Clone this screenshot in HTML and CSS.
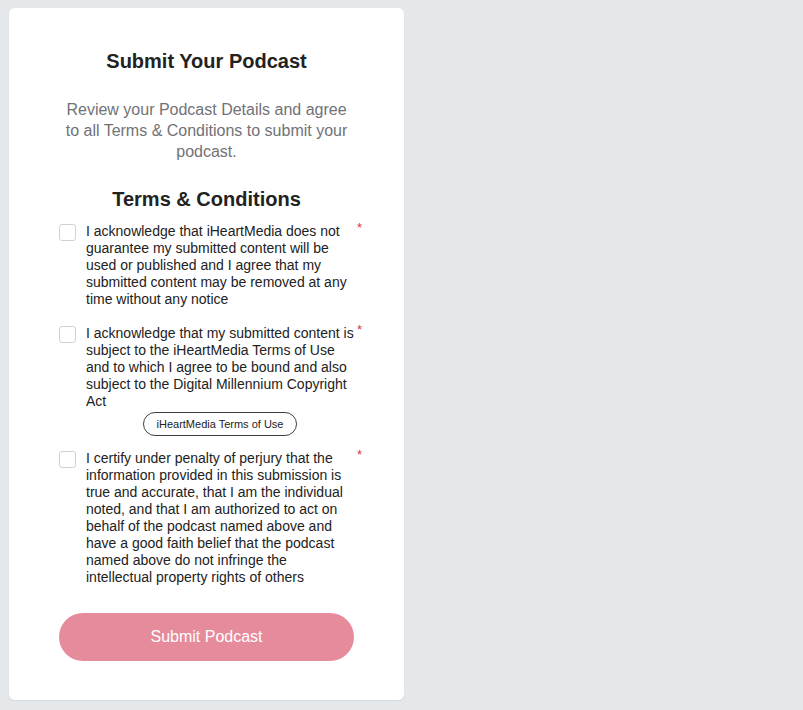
FILE: index.html
```html
<!DOCTYPE html>
<html lang="en">
<head>
<meta charset="utf-8">
<title>Submit Your Podcast</title>
<link rel="stylesheet" href="styles.css">
</head>
<body>
<main class="card">
  <h1 class="title">Submit Your Podcast</h1>
  <p class="subtitle">Review your Podcast Details and agree to all Terms &amp; Conditions to submit your podcast.</p>
  <h2 class="section-title">Terms &amp; Conditions</h2>

  <div class="term term-1">
    <span class="checkbox"></span>
    <div class="term-body">
      <p class="term-text">I acknowledge that iHeartMedia does not guarantee my submitted content will be used or published and I agree that my submitted content may be removed at any time without any notice</p>
    </div>
    <span class="required">*</span>
  </div>

  <div class="term term-2">
    <span class="checkbox"></span>
    <div class="term-body">
      <p class="term-text">I acknowledge that my submitted content is subject to the iHeartMedia Terms of Use and to which I agree to be bound and also subject to the Digital Millennium Copyright Act</p>
      <div class="link-row"><a class="pill" href="#">iHeartMedia Terms of Use</a></div>
    </div>
    <span class="required">*</span>
  </div>

  <div class="term term-3">
    <span class="checkbox"></span>
    <div class="term-body">
      <p class="term-text">I certify under penalty of perjury that the information provided in this submission is true and accurate, that I am the individual noted, and that I am authorized to act on behalf of the podcast named above and have a good faith belief that the podcast named above do not infringe the intellectual property rights of others</p>
    </div>
    <span class="required">*</span>
  </div>

  <button class="submit" type="button">Submit Podcast</button>
</main>
</body>
</html>
```

FILE: styles.css
```css
html, body {
  margin: 0;
  padding: 0;
}
body {
  background: #e5e8eb;
  font-family: "Liberation Sans", Arial, sans-serif;
  padding: 8px 0 0 9px;
  min-height: 710px;
  box-sizing: border-box;
}
.card {
  width: 395px;
  box-sizing: border-box;
  background: #ffffff;
  border-radius: 6px;
  padding: 41px 50px 39px;
  box-shadow: 0 1px 2px rgba(0,0,0,0.06);
}
.title {
  margin: 0;
  font-size: 20px;
  line-height: 24px;
  font-weight: bold;
  color: #222222;
  text-align: center;
}
.subtitle {
  margin: 26px 0 0;
  font-size: 16px;
  line-height: 21px;
  color: #717276;
  text-align: center;
}
.section-title {
  margin: 25px 0 0;
  font-size: 20px;
  line-height: 24px;
  font-weight: bold;
  color: #222222;
  text-align: center;
}
.term {
  position: relative;
  display: flex;
  gap: 10px;
}
.term-1 {
  margin-top: 12px;
}
.term-2 {
  margin-top: 17px;
}
.term-3 {
  margin-top: 14px;
}
.checkbox {
  flex: none;
  width: 15px;
  height: 15px;
  margin-top: 1px;
  border: 1px solid #cfd2d6;
  border-radius: 3px;
  background: #fff;
}
.term-body {
  flex: 1;
  width: 268px;
}
.term-text {
  margin: 0;
  font-size: 14px;
  line-height: 17px;
  color: #222222;
}
.required {
  position: absolute;
  right: -8px;
  top: -4px;
  color: #e0313f;
  font-size: 13px;
  line-height: 17px;
}
.link-row {
  display: flex;
  justify-content: center;
  margin-top: 2px;
}
.pill {
  display: inline-block;
  height: 24px;
  box-sizing: border-box;
  padding: 0 13px;
  border: 1px solid #3e3f41;
  border-radius: 12px;
  font-size: 11px;
  line-height: 22px;
  color: #222222;
  text-decoration: none;
}
.submit {
  display: block;
  width: 100%;
  height: 48px;
  margin-top: 27px;
  border: none;
  border-radius: 24px;
  background: #e58b9c;
  color: #ffffff;
  font-family: "Liberation Sans", Arial, sans-serif;
  font-size: 16px;
  cursor: pointer;
}
```
